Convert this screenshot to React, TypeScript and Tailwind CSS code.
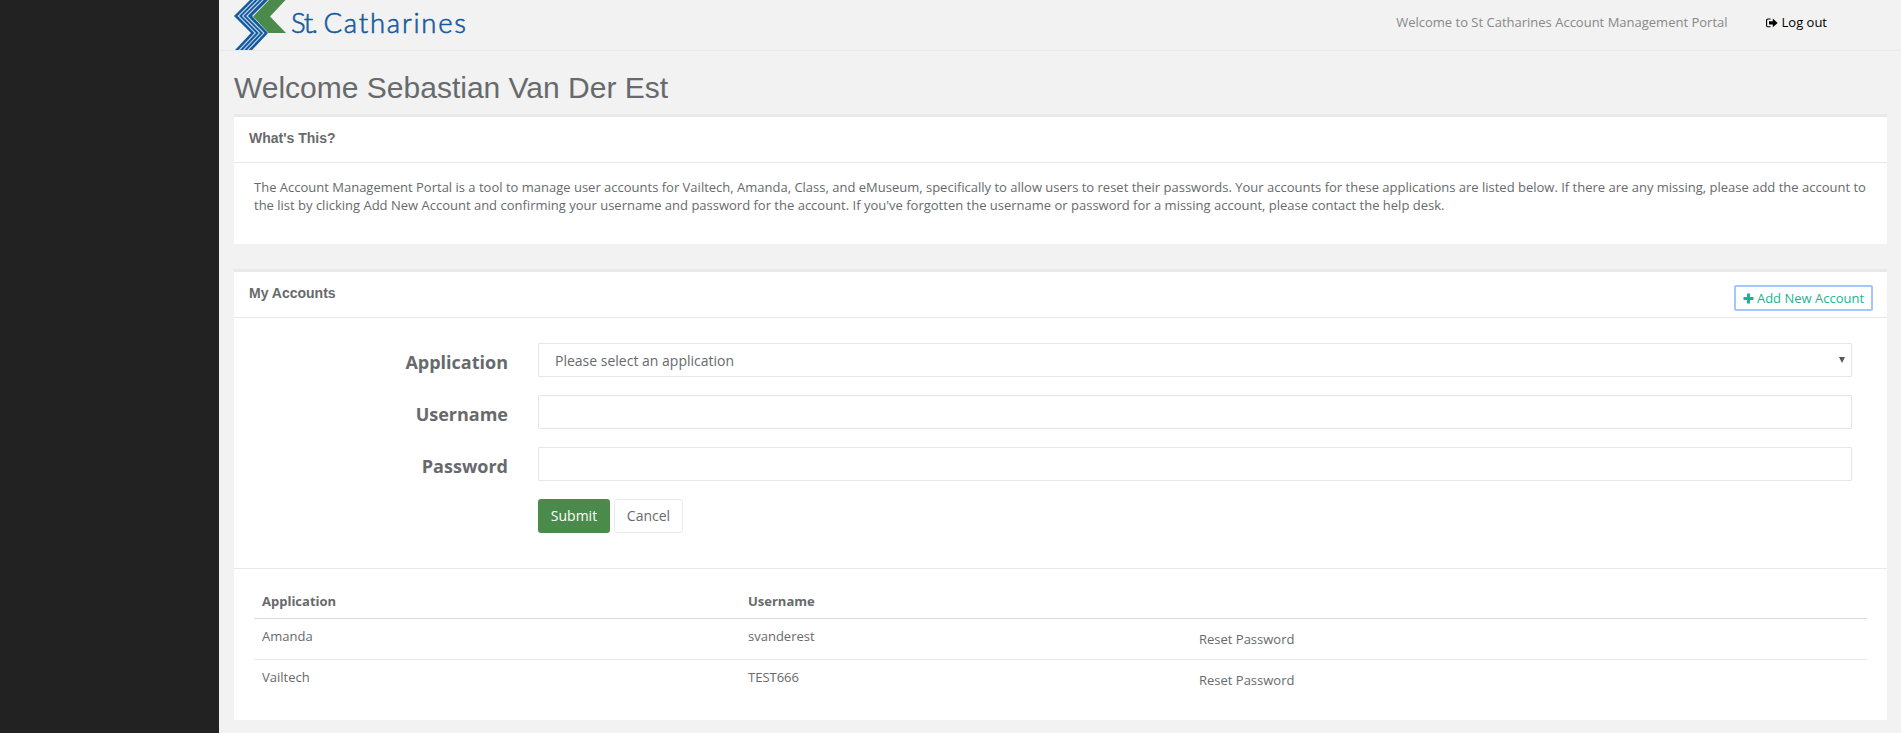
import React from "react";

function Logo() {
  return (
    <svg className="block h-[50px] w-[240px]" viewBox="0 0 240 50">
      <path d="M16 0 L0 16 L17 33 L1 50 H18 L34 33 L18 16 L34 0 Z" fill="#145a9e" />
      <g fill="none" stroke="#c3d5e6" strokeWidth="1.1">
        <path d="M21.3 -1 L4.3 16 L21.3 33 L4.3 51" />
        <path d="M25.6 -1 L8.6 16 L25.6 33 L8.6 51" />
        <path d="M29.9 -1 L12.9 16 L29.9 33 L12.9 51" />
      </g>
      <path d="M35 0 L19 16.5 L34.5 33 H52 L36 16.5 L51.5 0 Z" fill="#4a8b4b" />
      <g fontSize="27.5" fontFamily="'Lato Light', Lato, sans-serif" fontWeight="300" fill="#145a9e" stroke="#145a9e" strokeWidth="0.6">
        <text x="57" y="32.5" textLength="27">
          St.
        </text>
        <text x="89.5" y="32.5" textLength="142.5">
          Catharines
        </text>
      </g>
    </svg>
  );
}

function SignOutIcon() {
  return (
    <svg className="h-[10px] w-[12px]" viewBox="0 0 12 10">
      <path d="M4.5 1 H2 Q0.6 1 0.6 2.4 V7.4 Q0.6 8.8 2 8.8 H4.5" fill="none" stroke="#000" strokeWidth="1.1" />
      <path d="M3 3.2 H6.8 V0.6 L11.6 4.9 L6.8 9.2 V6.6 H3 Z" fill="#000" />
    </svg>
  );
}

function PanelTitle({ title, children }: { title: string; children?: React.ReactNode }) {
  return (
    <div className="flex h-[46px] items-start justify-between border-b border-[#e7eaec] pr-3.5 pl-[15px]">
      <h5 className="pt-[13px] font-['Liberation_Sans',sans-serif] text-sm leading-4 font-bold">{title}</h5>
      {children}
    </div>
  );
}

function Field({ label, children }: { label: string; children?: React.ReactNode }) {
  return (
    <div className="flex h-[34px]">
      <label className="w-[274px] pt-[7px] text-right text-[18px] leading-6 font-bold">{label}</label>
      <div className="ml-[30px] flex h-[34px] w-[1314px] items-center justify-between rounded-[1px] border border-[#e5e6e7] pr-1.5 pl-4 text-sm">
        {children}
      </div>
    </div>
  );
}

const accounts = [
  { app: "Amanda", user: "svanderest" },
  { app: "Vailtech", user: "TEST666" },
];

export default function App() {
  return (
    <div className="flex h-[733px] overflow-hidden bg-[#f2f2f2] font-['Open_Sans',sans-serif] text-[13px] text-[#676a6c]">
      <aside className="w-[219px] shrink-0 bg-[#222222]" />
      <main className="flex-1">
        <header className="flex h-[51px] justify-between border-b border-[#e7eaec] pl-[15px]">
          <Logo />
          <div className="flex h-[45px] items-center pr-[74px]">
            <span className="text-[#888888]">Welcome to St Catharines Account Management Portal</span>
            <a className="ml-[38px] flex items-center gap-1 text-black">
              <SignOutIcon />
              Log out
            </a>
          </div>
        </header>
        <div className="pr-3.5 pl-[15px]">
          <h1 className="h-[63px] pt-5 font-['Liberation_Sans',sans-serif] text-[30px] leading-[33px]">
            Welcome Sebastian Van Der Est
          </h1>
          <section className="h-[130px] border-t-[3px] border-[#e7eaec] bg-white">
            <PanelTitle title="What's This?" />
            <p className="px-5 pt-[15px] leading-[18px]">
              The Account Management Portal is a tool to manage user accounts for Vailtech, Amanda, Class, and eMuseum,
              specifically to allow users to reset their passwords. Your accounts for these applications are listed
              below. If there are any missing, please add the account to the list by clicking Add New Account and
              confirming your username and password for the account. If you've forgotten the username or password for a
              missing account, please contact the help desk.
            </p>
          </section>
          <section className="mt-[25px] h-[451px] border-t-[3px] border-[#e7eaec] bg-white">
            <PanelTitle title="My Accounts">
              <button className="mt-[13px] flex h-[26px] w-[139px] items-center justify-center gap-[3px] rounded-[2px] border-2 border-[#a5c5fb] pt-px text-[#1ab394]">
                <svg className="h-[11px] w-[11px]" viewBox="0 0 11 11">
                  <path d="M4 0.5 H7 V4 H10.5 V7 H7 V10.5 H4 V7 H0.5 V4 H4 Z" fill="currentColor" />
                </svg>
                Add New Account
              </button>
            </PanelTitle>
            <form className="flex h-[251px] flex-col gap-[18px] border-b border-[#e7eaec] pt-[25px]">
              <Field label="Application">
                <span className="pt-0.5">Please select an application</span>
                <svg className="h-1.5 w-1.5" viewBox="0 0 6 6">
                  <path d="M0 0 H6 L3 6 Z" fill="#55585a" />
                </svg>
              </Field>
              <Field label="Username" />
              <Field label="Password" />
              <div className="ml-[304px] flex gap-1 text-sm">
                <button type="button" className="h-[34px] w-[72px] rounded-[3px] bg-[#4a8b4b] text-white">
                  Submit
                </button>
                <button type="button" className="h-[34px] w-[69px] rounded-[3px] border border-[#e7eaec]">
                  Cancel
                </button>
              </div>
            </form>
            <div className="px-5 pt-[15px]">
              <div className="grid h-[35px] grid-cols-[486px_451px_1fr] border-b border-[#dddddd] px-2 pt-2 leading-[18px] font-bold">
                <span>Application</span>
                <span>Username</span>
              </div>
              {accounts.map((a) => (
                <div
                  key={a.app}
                  className="grid h-[41px] grid-cols-[486px_451px_1fr] border-b border-[#e7eaec] px-2 pt-2 leading-[18px] last:border-b-0"
                >
                  <span>{a.app}</span>
                  <span>{a.user}</span>
                  <span className="pt-[3px]">Reset Password</span>
                </div>
              ))}
            </div>
          </section>
        </div>
      </main>
    </div>
  );
}
